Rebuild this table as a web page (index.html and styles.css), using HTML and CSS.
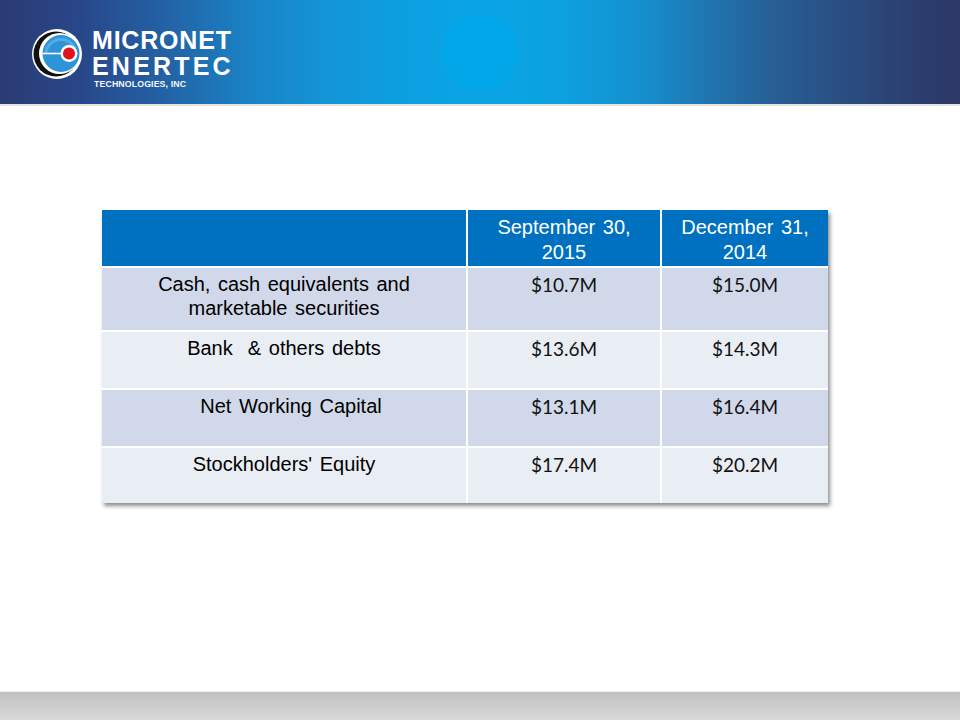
FILE: index.html
```html
<!DOCTYPE html>
<html lang="en">
<head>
<meta charset="utf-8">
<title>Micronet Enertec – Balance Sheet Highlights</title>
<link rel="stylesheet" href="styles.css">
</head>
<body>
<div class="page">
  <header class="banner">
    <div class="logo">
      <svg class="logo-mark" width="52" height="52" viewBox="0 0 52 52" aria-hidden="true">
        <circle cx="25" cy="26" r="25" fill="#ffffff"/>
        <circle cx="24" cy="26" r="22.5" fill="#111111"/>
        <circle cx="27.5" cy="25.5" r="20.5" fill="#ffffff"/>
        <circle cx="29" cy="25.5" r="18.5" fill="#2f93d8"/>
        <path d="M14 25.5 A15 15 0 0 1 43 21" fill="none" stroke="#6cbaee" stroke-width="3" opacity="0.6"/>
        <line x1="10.5" y1="25.5" x2="34" y2="25.5" stroke="#ffffff" stroke-width="1.6"/>
        <circle cx="37" cy="25.5" r="8.5" fill="#ffffff"/>
        <circle cx="37" cy="25.5" r="6" fill="#e0141e"/>
      </svg>
      <div class="logo-text">
        <div class="logo-line1">MICRONET</div>
        <div class="logo-line2">ENERTEC</div>
        <div class="logo-line3">TECHNOLOGIES, INC</div>
      </div>
    </div>
  </header>

  <main class="content">
    <div class="fin-table">
      <div class="cell head"></div>
      <div class="cell head">September 30,<br>2015</div>
      <div class="cell head">December 31,<br>2014</div>

      <div class="cell label odd">Cash, cash equivalents and<br>marketable securities</div>
      <div class="cell value odd">$10.7M</div>
      <div class="cell value odd">$15.0M</div>

      <div class="cell label even">Bank &nbsp;&amp; others debts</div>
      <div class="cell value even">$13.6M</div>
      <div class="cell value even">$14.3M</div>

      <div class="cell label odd shift">Net Working Capital</div>
      <div class="cell value odd">$13.1M</div>
      <div class="cell value odd">$16.4M</div>

      <div class="cell label even">Stockholders' Equity</div>
      <div class="cell value even">$17.4M</div>
      <div class="cell value even">$20.2M</div>
    </div>
  </main>

  <footer class="footer"></footer>
</div>
</body>
</html>
```

FILE: styles.css
```css
* {
  box-sizing: border-box;
}

html, body {
  margin: 0;
  padding: 0;
  background: #ffffff;
}

body {
  font-family: "Liberation Sans", Arial, sans-serif;
}

.page {
  width: 960px;
  height: 720px;
  display: flex;
  flex-direction: column;
  overflow: hidden;
}

/* ---------- banner ---------- */
.banner {
  height: 106px;
  flex: 0 0 auto;
  border-bottom: 2px solid #e9e4da;
  background:
    radial-gradient(circle at 480px 52px, #02a7e9 0, #02a7e9 37px, rgba(2,167,233,0) 40px),
    linear-gradient(to right,
      #2a3b73 0px,
      #28478a 80px,
      #2360a3 160px,
      #1a82c6 250px,
      #1296d8 330px,
      #0ba1e2 420px,
      #0aa4e4 480px,
      #0ca1e0 560px,
      #158fcf 640px,
      #1f78b4 700px,
      #265f96 770px,
      #2a4c80 850px,
      #2c3d6d 920px,
      #2c3868 960px);
  padding: 26px 0 0 32px;
}

.logo {
  display: flex;
  align-items: flex-start;
  gap: 8px;
}

.logo-mark {
  display: block;
  margin-top: 2px;
  flex: 0 0 auto;
}

.logo-text {
  color: #ffffff;
  font-family: "Liberation Sans", Arial, sans-serif;
  font-weight: bold;
  padding-top: 1px;
}

.logo-line1 {
  font-size: 25px;
  line-height: 26px;
  letter-spacing: 0.8px;
}

.logo-line2 {
  font-size: 25px;
  line-height: 26px;
  letter-spacing: 3.2px;
}

.logo-line3 {
  font-size: 8.8px;
  line-height: 10px;
  letter-spacing: 0.1px;
  margin-left: 2px;
  font-weight: bold;
  opacity: 0.95;
}

/* ---------- table ---------- */
.content {
  flex: 1 1 auto;
  padding: 104px 0 0 102px;
}

.fin-table {
  display: grid;
  grid-template-columns: 364px 192px 166px;
  grid-template-rows: 56px 62px 56px 56px 55px;
  gap: 2px;
  width: 726px;
  background: #ffffff;
  box-shadow: 2px 3px 4px rgba(0, 0, 0, 0.45);
}

.cell {
  text-align: center;
  padding-top: 4px;
  font-size: 20px;
  line-height: 24px;
  color: #000000;
  word-spacing: 2px;
}

.head {
  background: #0070c0;
  color: #ffffff;
  line-height: 25px;
  padding-top: 5px;
}

.odd {
  background: #d0d8e9;
}

.even {
  background: #e9edf4;
}

.label {
  font-family: "Liberation Sans", Arial, sans-serif;
}

.shift {
  padding-left: 14px;
}

.value {
  font-family: Lato, "Open Sans", sans-serif;
  font-size: 19px;
  padding-top: 5px;
  word-spacing: 0;
  color: #111111;
}

/* ---------- footer ---------- */
.footer {
  flex: 0 0 auto;
  height: 29px;
  border-top: 1px solid #eeeeee;
  background: linear-gradient(to bottom, #c1c1c1 0%, #cdcdcd 50%, #d8d8d8 100%);
}
```
